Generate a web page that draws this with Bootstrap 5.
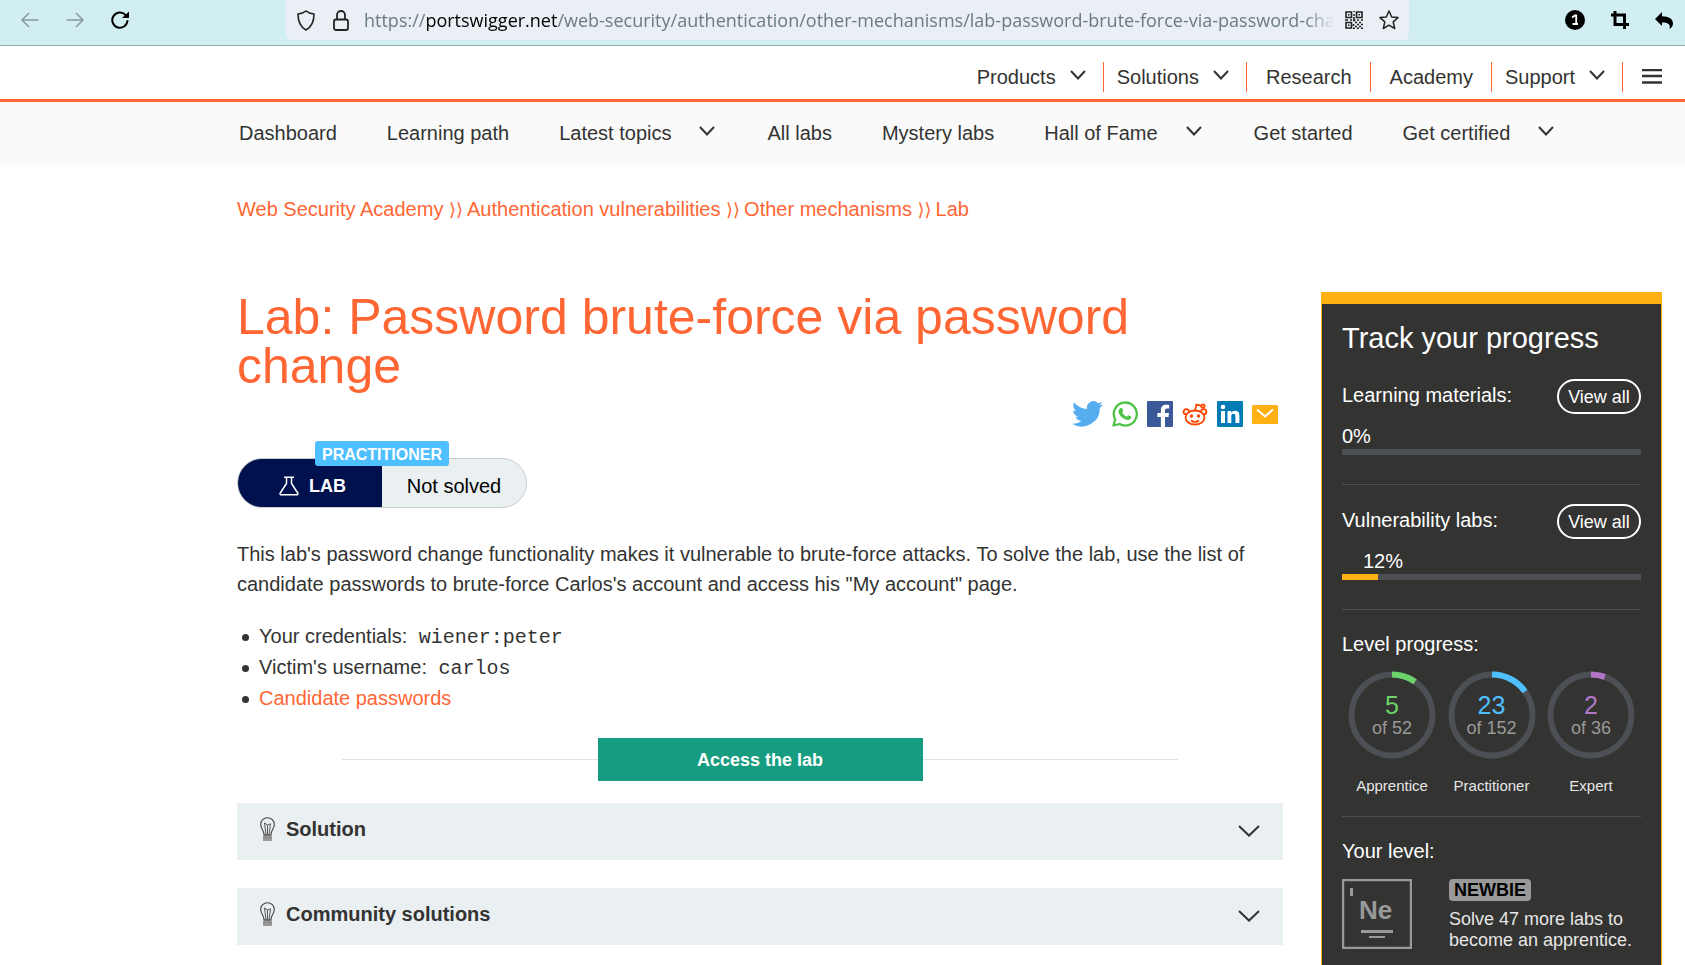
<!DOCTYPE html>
<html lang="en">
<head>
<meta charset="utf-8">
<meta name="viewport" content="width=device-width, initial-scale=1">
<title>Lab: Password brute-force via password change | Web Security Academy</title>
<link href="https://cdn.jsdelivr.net/npm/bootstrap@5.3.0/dist/css/bootstrap.min.css" rel="stylesheet">
<style>
  :root { --orange:#ff6633; --ink:#333332; --amber:#ffb013; --track:#4c4f54; --pale:#eaeff2; }
  body { font-family:"Liberation Sans",Arial,sans-serif; font-size:20px; line-height:30px; color:var(--ink); background:#fff; }
  a { color:inherit; text-decoration:none; }
  svg { display:block; flex:none; }
  button { font-family:inherit; }
  .icon-btn { background:none; border:0; padding:0; color:#000; }
  .icon-btn:disabled { color:#86999b; }

  .browser-bar { height:46px; background:#d1eff3; border-bottom:1px solid #96a9ac; padding:0 12px 5px 21px; }
  .nav-tools { width:265px; gap:27px; }
  .address { height:40px; margin-right:156px; padding:0 10px 0 11px; background:#eaeff5; border-radius:0 0 6px 6px; min-width:0; }
  .address-url { font-family:"Open Sans","Noto Sans",sans-serif; font-size:18px; color:#6b7c7e; overflow:hidden; white-space:nowrap; margin:0 10px 0 14px; min-width:0;
    -webkit-mask-image:linear-gradient(to left,transparent,#000 30px); mask-image:linear-gradient(to left,transparent,#000 30px); }
  .address-url b { color:#000; font-weight:400; }
  .lock { margin-left:17px; }
  .extensions { gap:26px; }

  .site-header { height:56px; border-bottom:3px solid var(--orange); padding:8px 23px 0 0; }
  .site-header .item { height:30px; border-right:1px solid var(--orange); padding:0 18px 0 19px; display:flex; align-items:center; gap:14px; }
  .site-header .drop { padding:0 17px 0 13px; }
  .menu-btn { padding-left:19px; }
  .chev { margin-bottom:4px; }
  .academy-nav { height:63px; background:#fafafa; padding:0 20px 2px 239px; gap:50px; }
  .academy-nav a { display:flex; align-items:center; gap:28px; white-space:nowrap; }
  .academy-nav .chev { margin-right:2px; }

  .page-body { padding:29px 23px 0 237px; }
  .crumbs { color:var(--orange); margin-bottom:68px; }
  .crumbs .sep { font-family:"DejaVu Sans",sans-serif; font-size:18px; line-height:20px; margin-right:4px; }
  .columns { gap:38px; }
  .lab { min-width:0; padding-top:1px; }
  h1 { font-size:50px; line-height:49px; color:var(--orange); font-weight:400; margin:0; }
  .share { gap:9px; height:26px; margin:10px 5px 0 0; }
  .status { width:290px; height:50px; margin-top:31px; border:1px solid #c9cccd; border-radius:25px; background:var(--pale); color:#000; }
  .status .kind { width:144px; background:#00114d; color:#fff; font-size:18px; font-weight:700; border-radius:24px 0 0 24px; gap:10px; padding:5px 0 0 5px; }
  .status .state { padding-top:5px; }
  .level-tag { position:absolute; left:77px; top:-18px; height:25px; padding:0 7px; background:#4ebfff; color:#fff; font-size:16px; font-weight:700; line-height:27px; border-radius:3px; }
  .intro { margin:31px 0 22px; }
  .facts { margin:0 0 24px; padding-left:22px; line-height:31px; list-style:none; }
  .facts li { position:relative; }
  .facts li::before { content:""; position:absolute; left:-17px; top:13px; width:7px; height:7px; border-radius:50%; background:var(--ink); }
  .facts code { font-family:"Liberation Mono","Courier New",monospace; font-size:20px; line-height:20px; color:inherit; padding-left:6px; }
  .facts a { color:var(--orange); }
  .access { width:80%; margin:0 auto 22px; }
  .access::before, .access::after { content:""; flex:1; height:1px; background:#dfe3e4; }
  .access button { width:325px; height:43px; border:0; border-radius:0; background:#169c80; color:#fff; font-size:18px; font-weight:700; }
  .fold { width:100%; height:57px; border:0; padding:0 23px 6px; gap:11px; margin-bottom:28px; background:var(--pale); color:var(--ink); font-weight:700; text-align:left; }
  .fold:last-child { margin-bottom:0; }
  .fold .chev { margin:5px 0 0 auto; }

  .progress-panel { width:341px; flex:none; background:var(--ink); color:#fff; border:1px solid var(--amber); border-top-width:12px; border-bottom:0; padding:18px 20px 0; }
  .progress-panel h2 { font-size:29px; line-height:32px; font-weight:400; margin:0 0 25px; }
  .meter-row { height:35px; }
  .meter-row span { padding-top:1px; }
  .view-all { width:84px; height:35px; border:2px solid #fff; border-radius:18px; background:none; color:#fff; font-size:18px; line-height:30px; padding:0; }
  .meter-label { line-height:22px; margin-top:11px; }
  .meter-label.indented { padding-left:21px; }
  .meter-track { height:6px; background:var(--track); margin-top:2px; }
  .meter-fill { height:6px; background:var(--amber); }
  .rule { height:1px; background:var(--track); margin:29px 0 19px; }
  .rings { padding:0 6px; margin-top:12px; }
  .rings + .rule { margin-top:21px; }
  .ring { position:relative; width:88px; text-align:center; font-size:15px; line-height:18px; color:#e6e6e6; }
  .ring-text { position:absolute; inset:22px 0 auto; }
  .ring-num { font-size:25px; line-height:24px; }
  .ring-of { font-size:18px; line-height:22px; color:#999; }
  .ring-name { margin-top:18px; }
  .rank { font-size:18px; line-height:21px; color:#e6e6e6; gap:37px; margin-top:13px; }
  .rank-tag { display:inline-block; height:22px; padding:0 5px; border-radius:4px; background:#999; color:#000; font-weight:700; line-height:22px; margin-bottom:8px; }
</style>
</head>
<body class="d-flex flex-column min-vh-100">

<svg width="0" height="0" class="position-absolute" aria-hidden="true">
  <symbol id="chevron" viewBox="0 0 16 10"><path d="M1 1l7 7.500L15 1" fill="none" stroke="#333332" stroke-width="2"/></symbol>
  <symbol id="fold-chevron" viewBox="0 0 22 12"><path d="M1 1l10 9.500L21 1" fill="none" stroke="#333332" stroke-width="2"/></symbol>
  <symbol id="bulb" viewBox="0 0 15 24">
    <path d="M4 17.500C4 13 .7 12 .7 7.500a6.800 6.800 0 0 1 13.600 0C14.300 12 11 13 11 17.500" fill="none" stroke="#444" stroke-width="1.100"/>
    <path d="M6 17.500L4.500 6l3 2 3-1.200-1.500 10.700M7.500 8v9" fill="none" stroke="#444" stroke-width=".9"/>
    <path d="M3.500 18h8" stroke="#222" stroke-width="1.200"/><path d="M3 19.500h9V24H3z" fill="#999"/><path d="M3 20h9" stroke="#777"/>
  </symbol>
</svg>

<div class="browser-bar d-flex align-items-center">
  <div class="nav-tools d-flex align-items-center flex-shrink-0">
    <button class="icon-btn" aria-label="Back" disabled><svg width="18" height="16" viewBox="0 0 18 16" fill="none" stroke="currentColor" stroke-width="1.500"><path d="M17.500 8H1.500M8 1L1 8l7 7"/></svg></button>
    <button class="icon-btn" aria-label="Forward" disabled><svg width="18" height="16" viewBox="0 0 18 16" fill="none" stroke="currentColor" stroke-width="1.500"><path d="M.5 8h16M10 1l7 7-7 7"/></svg></button>
    <button class="icon-btn" aria-label="Reload"><svg width="18" height="18" viewBox="0 0 18 18"><path d="M14.500 4A7.600 7.600 0 1 0 16.500 9.300" fill="none" stroke="currentColor" stroke-width="2"/><path d="M18 .5V7h-7z" fill="currentColor"/></svg></button>
  </div>
  <div class="address d-flex align-items-center flex-grow-1">
    <svg width="18" height="21" viewBox="0 0 18 21" fill="none" stroke="#222" stroke-width="1.600"><path d="M9 1c2.200 1.900 5 2.700 8 3 0 7-1.500 12.500-8 16C2.500 16.500 1 11 1 4c3-.3 5.800-1.100 8-3z" stroke-linejoin="round"/></svg>
    <svg class="lock" width="18" height="21" viewBox="0 0 18 21" fill="none" stroke="#222" stroke-width="1.800"><rect x="2" y="9.500" width="14" height="10.500" rx="2"/><path d="M5 9.500V5a4 4 0 0 1 8 0v4.500"/></svg>
    <div class="address-url flex-grow-1">https://<b>portswigger.net</b>/web-security/authentication/other-mechanisms/lab-password-brute-force-via-password-change</div>
    <button class="icon-btn" aria-label="QR code"><svg width="18" height="18" viewBox="0 0 18 18" fill="none" stroke="#222" stroke-width="1.600"><path d="M1 1h5.500v5.500H1zM11.500 1H17v5.500h-5.500zM1 11.500h5.500V17H1z"/><path d="M3 3.800h1.600M13.500 3.800H15M3 14.300h1.600M8 0h2M8 4h2M9 6v3M0 9h3M5 9h2M8 9.500h2.500M12 9h2M16 9h2M10 11.500h2M14 11.500h2M12 13.500h2M16 13.500h2M8.500 13v2M10 15.500h2M14 15.500h2M8 17.200h2M12 17.200h2M16 17.200h2"/></svg></button>
    <button class="icon-btn ms-3" aria-label="Bookmark"><svg width="20" height="20" viewBox="0 0 20 20" fill="none" stroke="#222" stroke-width="1.500" stroke-linejoin="round"><path d="M10 1l2.700 6 6.300.6-4.800 4.300 1.500 6.600L10 15.200l-5.700 3.300 1.500-6.600L1 7.600 7.300 7z"/></svg></button>
  </div>
  <div class="extensions d-flex align-items-center flex-shrink-0">
    <button class="icon-btn" aria-label="Notifications"><svg width="20" height="20" viewBox="0 0 20 20"><circle cx="10" cy="10" r="10"/><path d="M7 7.500L10 5.500h1.200V14M7.500 14H13" fill="none" stroke="#fff" stroke-width="1.800"/></svg></button>
    <button class="icon-btn" aria-label="Crop"><svg width="18" height="18" viewBox="0 0 18 18" fill="none" stroke="#000" stroke-width="3"><path d="M4 0v13.500h14M0 4h13.500V18"/></svg></button>
    <button class="icon-btn" aria-label="Undo"><svg width="18" height="18" viewBox="0 0 18 18"><path d="M7 1v4.200c7 0 11 3 11 7.300 0 2.500-1.500 4.300-3.500 5.500 1.300-5-1.500-6.500-7.500-6.500V15L0 8z"/></svg></button>
  </div>
</div>

<header class="site-header d-flex align-items-center justify-content-end">
  <a href="#" class="item drop">Products <svg class="chev" width="16" height="10"><use href="#chevron"/></svg></a>
  <a href="#" class="item drop">Solutions <svg class="chev" width="16" height="10"><use href="#chevron"/></svg></a>
  <a href="#" class="item">Research</a>
  <a href="#" class="item">Academy</a>
  <a href="#" class="item drop">Support <svg class="chev" width="16" height="10"><use href="#chevron"/></svg></a>
  <button class="icon-btn menu-btn" aria-label="Menu"><svg width="20" height="15" viewBox="0 0 20 15"><path d="M0 1h20M0 7h20M0 13.500h20" stroke="#333332" stroke-width="2.400"/></svg></button>
</header>

<nav class="academy-nav d-flex align-items-center">
  <a href="#">Dashboard</a>
  <a href="#">Learning path</a>
  <a href="#">Latest topics <svg class="chev" width="16" height="10"><use href="#chevron"/></svg></a>
  <a href="#">All labs</a>
  <a href="#">Mystery labs</a>
  <a href="#">Hall of Fame <svg class="chev" width="16" height="10"><use href="#chevron"/></svg></a>
  <a href="#">Get started</a>
  <a href="#">Get certified <svg class="chev" width="16" height="10"><use href="#chevron"/></svg></a>
</nav>

<div class="page-body d-flex flex-column flex-grow-1">
  <nav class="crumbs" aria-label="Breadcrumb"><a href="#">Web Security Academy</a> <span class="sep">⟩⟩</span><a href="#">Authentication vulnerabilities</a> <span class="sep">⟩⟩</span><a href="#">Other mechanisms</a> <span class="sep">⟩⟩</span><a href="#">Lab</a></nav>

  <div class="columns d-flex flex-grow-1">
    <main class="lab flex-grow-1">
      <h1>Lab: Password brute-force via password change</h1>

      <div class="share d-flex justify-content-end align-items-center">
        <a href="#" aria-label="Twitter"><svg width="31" height="26" viewBox="0 0 24 20" fill="#55acee"><path d="M24 2.400a9.800 9.800 0 0 1-2.800.8 4.900 4.900 0 0 0 2.100-2.700 9.900 9.900 0 0 1-3.100 1.200 4.900 4.900 0 0 0-8.400 4.500A14 14 0 0 1 1.700 1 4.900 4.900 0 0 0 3.200 7.600 4.900 4.900 0 0 1 1 7v.1a4.900 4.900 0 0 0 3.900 4.800 4.900 4.900 0 0 1-2.200.1 4.900 4.900 0 0 0 4.600 3.400A9.900 9.900 0 0 1 0 17.500a14 14 0 0 0 21.500-12.400A10 10 0 0 0 24 2.400z"/></svg></a>
        <a href="#" aria-label="WhatsApp"><svg width="26" height="26" viewBox="0 0 26 26"><path d="M1.500 24.500l1.700-6A11.500 11.500 0 1 1 7.600 23z" fill="none" stroke="#4dc247" stroke-width="2.300" stroke-linejoin="round"/><path d="M9.300 7c.5 0 .8 0 1 .6l.9 2.200c.1.500-.6 1.200-1 1.700 1 2 2.500 3.300 4.700 4.200.6-.5 1-1.600 1.600-1.400l2.400 1.200c.5.300.3 2-.7 2.800-1.300 1-3 1-5.200 0-3-1.300-5-3.400-6.300-6.200C6 9.800 7.300 7 9.300 7z" fill="#4dc247"/></svg></a>
        <a href="#" aria-label="Facebook"><svg width="26" height="26" viewBox="0 0 26 26"><rect width="26" height="26" rx="1" fill="#3b5998"/><path d="M18 26V16h3.500l.5-4h-4V9.500c0-1.200.4-2 2-2h2.200V4c-.4 0-1.600-.2-3.100-.2-3.100 0-5.200 1.900-5.200 5.300V12h-3.500v4h3.500v10z" fill="#fff"/></svg></a>
        <a href="#" aria-label="Reddit"><svg width="26" height="26" viewBox="0 0 26 26" fill="none" stroke="#ff4500" stroke-width="1.800"><ellipse cx="13" cy="16.500" rx="9.500" ry="7"/><path d="M13 9.500l1.500-6 5 1.300M4 13.500A2.700 2.700 0 1 1 7 10.500M22 13.500a2.700 2.700 0 1 0-3-3M9 19.500c2 1.800 6 1.800 8 0"/><circle cx="21" cy="5" r="1.700"/><circle cx="9.500" cy="15" r="1.700" fill="#ff4500" stroke="none"/><circle cx="16.500" cy="15" r="1.700" fill="#ff4500" stroke="none"/></svg></a>
        <a href="#" aria-label="LinkedIn"><svg width="26" height="26" viewBox="0 0 26 26"><rect width="26" height="26" rx="1" fill="#007bb6"/><path d="M4 10h4v12H4zM10.500 10h3.700v1.700c.7-1.200 2-2 3.800-2 3.600 0 4.400 2.300 4.400 5.500V22h-4v-6c0-1.500 0-3.200-2-3.200s-2.100 1.500-2.100 3.100V22h-3.800z" fill="#fff"/><circle cx="6" cy="6" r="2.300" fill="#fff"/></svg></a>
        <a href="#" aria-label="Email"><svg width="26" height="19" viewBox="0 0 26 19"><rect width="26" height="19" rx="1.500" fill="#ffb013"/><path d="M5 4.500l8 7 8-7" fill="none" stroke="#fff" stroke-width="2"/></svg></a>
      </div>

      <div class="status d-flex position-relative">
        <div class="kind d-flex align-items-center justify-content-center"><svg width="20" height="20" viewBox="0 0 20 20" fill="none" stroke="#fff" stroke-width="1.500"><path d="M5 1.200h10M7.500 1.500v6L1.300 17c-.6 1 0 1.800 1 1.800h15.400c1 0 1.600-.8 1-1.800L12.500 7.500v-6"/></svg>LAB</div>
        <div class="state d-flex align-items-center justify-content-center flex-grow-1">Not solved</div>
        <span class="level-tag">PRACTITIONER</span>
      </div>

      <p class="intro">This lab's password change functionality makes it vulnerable to brute-force attacks. To solve the lab, use the list of candidate passwords to brute-force Carlos's account and access his "My account" page.</p>
      <ul class="facts">
        <li>Your credentials: <code>wiener:peter</code></li>
        <li>Victim's username: <code>carlos</code></li>
        <li><a href="#">Candidate passwords</a></li>
      </ul>

      <div class="access d-flex align-items-center"><button type="button">Access the lab</button></div>

      <button type="button" class="fold d-flex align-items-center"><svg width="15" height="24"><use href="#bulb"/></svg><span>Solution</span><svg class="chev" width="22" height="12"><use href="#fold-chevron"/></svg></button>
      <button type="button" class="fold d-flex align-items-center"><svg width="15" height="24"><use href="#bulb"/></svg><span>Community solutions</span><svg class="chev" width="22" height="12"><use href="#fold-chevron"/></svg></button>
    </main>

    <aside class="progress-panel">
      <h2>Track your progress</h2>
      <div class="meter-row d-flex justify-content-between"><span>Learning materials:</span><button type="button" class="view-all">View all</button></div>
      <div class="meter-label">0%</div>
      <div class="meter-track"></div>
      <div class="rule"></div>
      <div class="meter-row d-flex justify-content-between"><span>Vulnerability labs:</span><button type="button" class="view-all">View all</button></div>
      <div class="meter-label indented">12%</div>
      <div class="meter-track"><div class="meter-fill" style="width:12%"></div></div>
      <div class="rule"></div>
      <div>Level progress:</div>
      <div class="rings d-flex justify-content-between">
        <div class="ring">
          <svg width="88" height="88" viewBox="0 0 88 88" fill="none" stroke-width="6"><circle cx="44" cy="44" r="40.500" stroke="#4c4f54"/><circle cx="44" cy="44" r="40.500" stroke="#6bd26b" pathLength="52" stroke-dasharray="5 47" transform="rotate(-90 44 44)"/></svg>
          <div class="ring-text"><div class="ring-num" style="color:#6bd26b">5</div><div class="ring-of">of 52</div></div>
          <div class="ring-name">Apprentice</div>
        </div>
        <div class="ring">
          <svg width="88" height="88" viewBox="0 0 88 88" fill="none" stroke-width="6"><circle cx="44" cy="44" r="40.500" stroke="#4c4f54"/><circle cx="44" cy="44" r="40.500" stroke="#4ebfff" pathLength="152" stroke-dasharray="23 129" transform="rotate(-90 44 44)"/></svg>
          <div class="ring-text"><div class="ring-num" style="color:#4ebfff">23</div><div class="ring-of">of 152</div></div>
          <div class="ring-name">Practitioner</div>
        </div>
        <div class="ring">
          <svg width="88" height="88" viewBox="0 0 88 88" fill="none" stroke-width="6"><circle cx="44" cy="44" r="40.500" stroke="#4c4f54"/><circle cx="44" cy="44" r="40.500" stroke="#b276c8" pathLength="36" stroke-dasharray="2 34" transform="rotate(-90 44 44)"/></svg>
          <div class="ring-text"><div class="ring-num" style="color:#b276c8">2</div><div class="ring-of">of 36</div></div>
          <div class="ring-name">Expert</div>
        </div>
      </div>
      <div class="rule"></div>
      <div>Your level:</div>
      <div class="rank d-flex">
        <svg width="70" height="70" viewBox="0 0 70 70"><rect x="1" y="1" width="68" height="68" fill="none" stroke="#999" stroke-width="2.500"/><path d="M8 9h3v8H8zM19 51h32v3H19zM27 57h16v2H27z" fill="#999"/><text x="17" y="40" font-family="Liberation Sans, sans-serif" font-size="26" font-weight="700" fill="#999">Ne</text></svg>
        <div><span class="rank-tag">NEWBIE</span><div>Solve 47 more labs to become an apprentice.</div></div>
      </div>
    </aside>
  </div>
</div>

<script src="https://cdn.jsdelivr.net/npm/bootstrap@5.3.0/dist/js/bootstrap.bundle.min.js"></script>
</body>
</html>
